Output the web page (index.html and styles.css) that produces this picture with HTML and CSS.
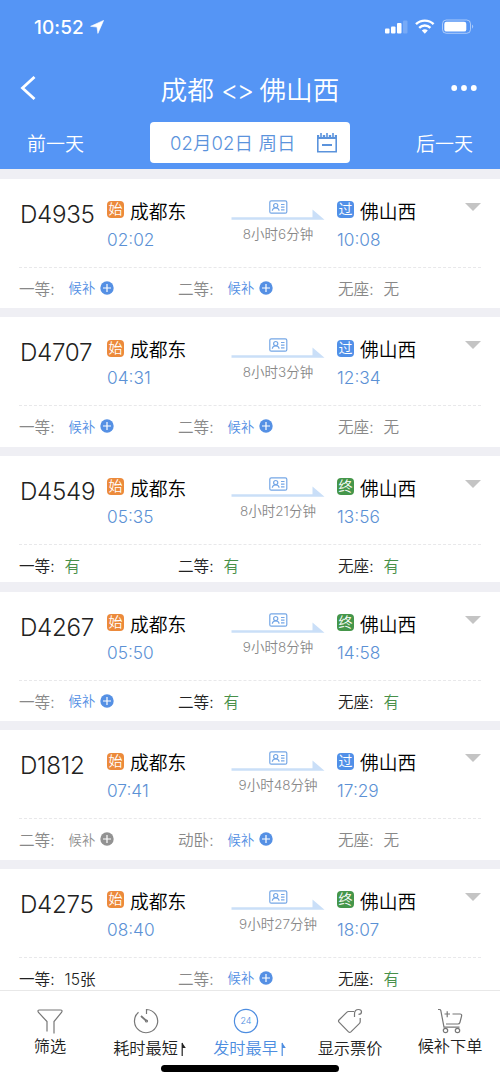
FILE: index.html
```html
<!DOCTYPE html>
<html lang="zh-CN">
<head>
<meta charset="utf-8">
<title>成都 - 佛山西</title>
<link rel="stylesheet" href="styles.css">
</head>
<body>
<svg class="defs" aria-hidden="true">
  <symbol id="route" viewBox="0 0 94 24">
    <g fill="none" stroke="#75a7e6" stroke-width="1.2"><rect x="38.800" y="1.800" width="17" height="12.400" rx="1.500"/><circle cx="44.700" cy="6.600" r="2.100"/><path d="M41.300 11.800c.2-2 1.500-3 3.400-3s3.200 1 3.400 3M50 5.500h3.500M50 8.200h3.500M50 10.900h3.500"/></g>
    <path fill="#cadff8" d="M.5 18.300H81.500V10.500l12 10.200H.5z"/>
  </symbol>
  <symbol id="plus" viewBox="0 0 14 14"><circle cx="7" cy="7" r="6.700" fill="currentColor"/><path d="M7 3v8M3 7h8" stroke="#fff" stroke-width="1.200"/></symbol>
</svg>
<div class="app">
  <header class="header">
    <div class="status">
      <span class="clock">10:52</span>
      <svg class="location" viewBox="0 0 14 14"><path fill="#fff" stroke="#fff" stroke-width=".6" d="M13.600.4 7.900 13.400 7 7.100.6 6.300z"/></svg>
      <svg class="signals" viewBox="0 0 90 16">
        <g fill="#fff"><rect x="0" y="9.500" width="4.500" height="5" rx="1"/><rect x="6" y="7.500" width="4.500" height="7" rx="1"/><rect x="12" y="4" width="4.500" height="10.500" rx="1"/><rect x="18" y="1.500" width="4.500" height="13" rx="1" opacity=".2"/></g>
        <g fill="none" stroke="#fff" stroke-width="2.400"><path d="M31 5.200a12.500 12.500 0 0 1 17.600 0M34.200 8.800a8 8 0 0 1 11.200 0"/></g>
        <path fill="#fff" d="m39.800 14.700-3-3.200a4.500 4.500 0 0 1 6 0z"/>
        <rect x="57.500" y="1" width="28" height="13.300" rx="3.800" fill="none" stroke="#fff" stroke-opacity=".5"/><rect x="59.300" y="2.800" width="22" height="9.800" rx="2.200" fill="#fff"/><path d="M87.200 5.500q2 2 0 4.200z" fill="#fff" opacity=".6"/>
      </svg>
    </div>
    <div class="nav">
      <svg class="back" viewBox="0 0 16 24"><path d="M14.500 1 2.500 12l12 11" fill="none" stroke="#fff" stroke-width="2.800"/></svg>
      <h1 class="title"><span>成都</span><span class="swap">&lt;&gt;</span><span>佛山西</span></h1>
      <svg class="more" viewBox="0 0 26 8"><g fill="#fff"><circle cx="3.200" cy="4" r="2.900"/><circle cx="13" cy="4" r="2.900"/><circle cx="22.800" cy="4" r="2.900"/></g></svg>
    </div>
    <div class="days">
      <span class="day">前一天</span>
      <div class="date"><span>02月02日 周日</span>
        <svg class="calendar" viewBox="0 0 22 22"><g fill="none" stroke="#5b93dc"><path stroke-width="1.600" d="M1.800 3v16.700h18.400V3"/><path stroke-width="2" d="M6 13h10"/><path stroke-width="4" d="M1.500 5h19"/><path stroke="#fff" stroke-width="3.600" d="M5 0v5M11 0v5M17 0v5"/><path stroke-width="1.600" d="M5 1v4.200M11 1v4.200M17 1v4.200"/></g></svg>
      </div>
      <span class="day">后一天</span>
    </div>
  </header>

  <main class="list">
    <article class="train">
      <div class="trip">
        <div class="code">D4935</div>
        <div class="stop"><div class="station"><i class="tag start">始</i>成都东</div><div class="time">02:02</div></div>
        <div class="route"><svg class="line"><use href="#route"/></svg><div class="duration">8小时6分钟</div></div>
        <div class="stop"><div class="station"><i class="tag pass">过</i>佛山西</div><div class="time">10:08</div></div>
        <i class="caret"></i>
      </div>
      <div class="seats">
        <div class="seat none">一等:<a class="wait">候补<svg><use href="#plus"/></svg></a></div>
        <div class="seat none">二等:<a class="wait">候补<svg><use href="#plus"/></svg></a></div>
        <div class="seat none">无座:<span class="count">无</span></div>
      </div>
    </article>
    <article class="train">
      <div class="trip">
        <div class="code">D4707</div>
        <div class="stop"><div class="station"><i class="tag start">始</i>成都东</div><div class="time">04:31</div></div>
        <div class="route"><svg class="line"><use href="#route"/></svg><div class="duration">8小时3分钟</div></div>
        <div class="stop"><div class="station"><i class="tag pass">过</i>佛山西</div><div class="time">12:34</div></div>
        <i class="caret"></i>
      </div>
      <div class="seats">
        <div class="seat none">一等:<a class="wait">候补<svg><use href="#plus"/></svg></a></div>
        <div class="seat none">二等:<a class="wait">候补<svg><use href="#plus"/></svg></a></div>
        <div class="seat none">无座:<span class="count">无</span></div>
      </div>
    </article>
    <article class="train compact">
      <div class="trip">
        <div class="code">D4549</div>
        <div class="stop"><div class="station"><i class="tag start">始</i>成都东</div><div class="time">05:35</div></div>
        <div class="route"><svg class="line"><use href="#route"/></svg><div class="duration">8小时21分钟</div></div>
        <div class="stop"><div class="station"><i class="tag end">终</i>佛山西</div><div class="time">13:56</div></div>
        <i class="caret"></i>
      </div>
      <div class="seats">
        <div class="seat">一等:<span class="count yes">有</span></div>
        <div class="seat">二等:<span class="count yes">有</span></div>
        <div class="seat">无座:<span class="count yes">有</span></div>
      </div>
    </article>
    <article class="train">
      <div class="trip">
        <div class="code">D4267</div>
        <div class="stop"><div class="station"><i class="tag start">始</i>成都东</div><div class="time">05:50</div></div>
        <div class="route"><svg class="line"><use href="#route"/></svg><div class="duration">9小时8分钟</div></div>
        <div class="stop"><div class="station"><i class="tag end">终</i>佛山西</div><div class="time">14:58</div></div>
        <i class="caret"></i>
      </div>
      <div class="seats">
        <div class="seat none">一等:<a class="wait">候补<svg><use href="#plus"/></svg></a></div>
        <div class="seat">二等:<span class="count yes">有</span></div>
        <div class="seat">无座:<span class="count yes">有</span></div>
      </div>
    </article>
    <article class="train">
      <div class="trip">
        <div class="code">D1812</div>
        <div class="stop"><div class="station"><i class="tag start">始</i>成都东</div><div class="time">07:41</div></div>
        <div class="route"><svg class="line"><use href="#route"/></svg><div class="duration">9小时48分钟</div></div>
        <div class="stop"><div class="station"><i class="tag pass">过</i>佛山西</div><div class="time">17:29</div></div>
        <i class="caret"></i>
      </div>
      <div class="seats">
        <div class="seat none">二等:<a class="wait off">候补<svg><use href="#plus"/></svg></a></div>
        <div class="seat none">动卧:<a class="wait">候补<svg><use href="#plus"/></svg></a></div>
        <div class="seat none">无座:<span class="count">无</span></div>
      </div>
    </article>
    <article class="train">
      <div class="trip">
        <div class="code">D4275</div>
        <div class="stop"><div class="station"><i class="tag start">始</i>成都东</div><div class="time">08:40</div></div>
        <div class="route"><svg class="line"><use href="#route"/></svg><div class="duration">9小时27分钟</div></div>
        <div class="stop"><div class="station"><i class="tag end">终</i>佛山西</div><div class="time">18:07</div></div>
        <i class="caret"></i>
      </div>
      <div class="seats">
        <div class="seat">一等:<span class="count">15张</span></div>
        <div class="seat none">二等:<a class="wait">候补<svg><use href="#plus"/></svg></a></div>
        <div class="seat">无座:<span class="count yes">有</span></div>
      </div>
    </article>
  </main>

  <footer class="footer">
    <nav class="tabs">
      <a class="tab raised"><svg viewBox="0 0 26 26"><path d="M10 23.500V13.500L1.500 4.500Q0 2 2.500 2h21q2.500 0 1 2.500L17 13.500V25.500"/></svg><span>筛选</span></a>
      <a class="tab sorted"><svg viewBox="0 0 26 26"><path d="M13.500 6V1.500A11.600 11.600 0 1 1 5.500 4.300"/><path stroke-width="1.800" d="m8 8 5.500 5"/><circle cx="13.500" cy="13" r="1"/></svg><span>耗时最短<svg class="sort" viewBox="0 0 6 14"><path d="M1.200 14V1"/><path class="head" d="M1 .5 4.800 6H1z"/></svg></span></a>
      <a class="tab sorted active"><svg viewBox="0 0 26 26"><circle cx="13" cy="13" r="11.600"/><text x="13" y="16.400" text-anchor="middle">24</text></svg><span>发时最早<svg class="sort" viewBox="0 0 6 14"><path d="M1.200 14V1"/><path class="head" d="M1 .5 4.800 6H1z"/></svg></span></a>
      <a class="tab"><svg viewBox="0 0 26 26"><path d="M17 3.500h-5.500q-1 0-1.800.8L2 12q-1 1.100 0 2.200l9.500 9.700q1.200 1 2.400 0l8.600-8.500q.7-.8.700-1.800V10M17.500 9V6q0-4.500 4-4.500 3 0 3 2.300c0 1.700-1.200 2.600-3 2.600"/></svg><span>显示票价</span></a>
      <a class="tab raised"><svg viewBox="0 0 26 26"><path d="M1 1.500h1.500q1 0 1.300 1L7 19.200h15.500M7.500 6h5.500M10.200 3.200v6M15.500 6h7.500q2 0 1.600 2l-1.700 6.500q-.4 1.500-2 1.500H9"/><circle cx="8.500" cy="22.500" r="2.200"/><circle cx="20.500" cy="22.500" r="2.200"/></svg><span>候补下单</span></a>
    </nav>
    <div class="home"></div>
  </footer>
</div>
</body>
</html>
```
FILE: styles.css
```css
* { box-sizing: border-box; }
body { margin: 0; background: #fff; font-family: Inter, "Noto Sans CJK SC", sans-serif; font-weight: 350; }
.defs { position: absolute; width: 0; height: 0; }
.app { width: 500px; height: 1082px; display: flex; flex-direction: column; overflow: hidden; white-space: nowrap; }
i { font-style: normal; }

.header { flex: none; height: 169px; background: #5595f5; color: #fff; }
.status { display: flex; align-items: center; height: 54px; padding: 0 25px 0 34px; }
.clock { font-size: 19px; font-weight: 550; letter-spacing: .1px; }
.location { width: 14px; height: 14px; margin-left: 6px; }
.signals { width: 90px; height: 16px; margin-left: auto; }
.nav { display: flex; align-items: center; justify-content: space-between; height: 68px; padding: 0 23px 0 20px; }
.back { width: 16px; height: 24px; }
.title { display: flex; gap: 7px; margin: 3px 0 0 13px; font-size: 26.700px; font-weight: 350; line-height: 40px; }
.swap { letter-spacing: -1.700px; font-weight: 300; }
.more { width: 26px; height: 8px; }
.days { display: flex; align-items: center; justify-content: space-between; height: 41px; padding: 0 27px; font-size: 19px; }
.day { margin-top: -1px; }
.date { display: flex; align-items: center; justify-content: space-between; width: 200px; height: 41px; padding: 0 12px 0 20px; border-radius: 4px; background: #fff; color: #5b93dc; font-size: 18.500px; letter-spacing: .1px; }
.date span { margin-top: -2px; }
.calendar { width: 22px; height: 22px; }

.list { flex: none; height: 821px; display: flex; flex-direction: column; gap: 9.300px; padding-top: 9.700px; background: #efeff4; overflow: hidden; }
.train { flex: none; height: 129.300px; padding: 0 19px; background: #fff; }
.train.compact { height: 126.600px; }
.trip { display: grid; grid-template-columns: 88px 124px 94px 12px 128px 16px; height: 89px; border-bottom: 1px dashed #e8e8ea; }
.code { padding-left: 1px; font-size: 24.200px; line-height: 72px; letter-spacing: -.3px; color: #222; }
.stop { padding-top: 17px; }
.route + .stop { grid-column: 5; }
.station { display: flex; align-items: center; height: 29px; font-size: 18.800px; color: #000; }
.tag { width: 17px; height: 17px; margin: -1px 6px 0 0; border-radius: 4px; color: #fff; font-size: 14px; line-height: 16px; text-align: center; }
.start { background: #ec8a3b; }
.pass { background: #5190e8; }
.end { background: #45964a; }
.time { padding-top: 1px; font-size: 17.300px; line-height: 28px; color: #5b91d5; }
.route { padding-top: 20px; }
.line { display: block; width: 94px; height: 24px; }
.duration { font-size: 13.500px; line-height: 22px; text-align: center; color: #888; }
.caret { align-self: start; margin-top: 24px; border: 8px solid transparent; border-top-color: #c4c4c4; border-bottom: 0; }
.seats { display: grid; grid-template-columns: 159px 160px 1fr; height: 40px; color: #222; }
.seat { display: flex; align-items: center; font-size: 15.600px; }
.none { color: #888; }
.count { margin-left: 10px; }
.yes { color: #489049; }
.wait { display: flex; align-items: center; gap: 5px; margin-left: 14px; font-size: 13.300px; color: #5590e4; }
.wait.off { color: #929292; }
.wait svg { width: 14px; height: 14px; }

.footer { flex: none; height: 92px; border-top: 1px solid #e8e8e8; background: #fff; }
.tabs { display: grid; grid-template-columns: repeat(5, 100px); height: 75px; }
.tab { display: flex; flex-direction: column; align-items: center; padding-top: 17px; font-size: 16.200px; line-height: 24px; color: #222; }
.tab > svg { width: 26px; height: 26px; fill: none; stroke: #777; stroke-width: 1.200; }
.tab > span { margin-top: 2px; }
.raised > span { margin-top: 0; }
.sorted > svg { margin-right: 9px; }
.tab.active { color: #4d8de0; }
.active > svg { stroke: #4d8de0; }
.tab text { font-size: 9px; fill: #4d8de0; stroke: none; }
.sort { width: 6px; height: 14px; margin-left: 3px; vertical-align: -2px; fill: none; stroke: currentColor; stroke-width: 1.200; }
.sort .head { fill: currentColor; stroke: none; }
.home { width: 178px; height: 7px; margin: -1px auto 0; border-radius: 4px; background: #000; }
```
